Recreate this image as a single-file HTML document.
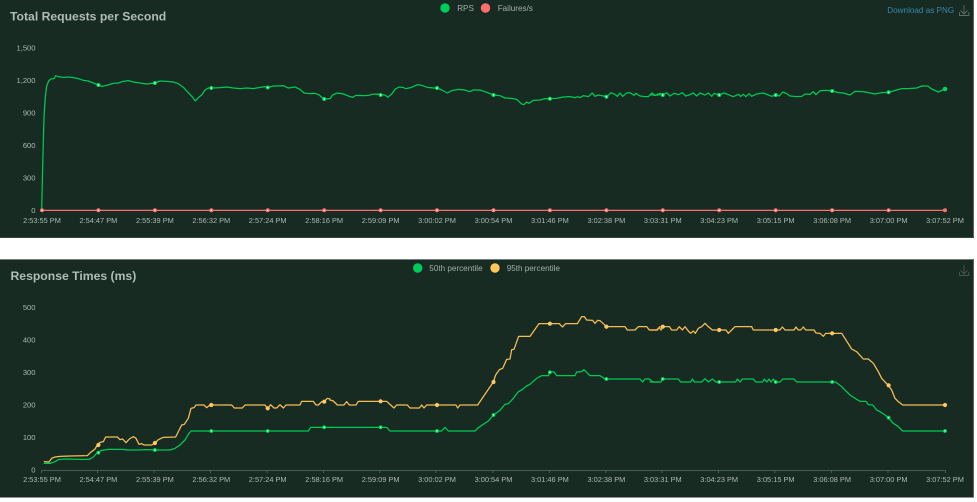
<!DOCTYPE html>
<html><head><meta charset="utf-8"><style>
html,body{margin:0;padding:0;background:#fff;width:977px;height:502px;overflow:hidden}
svg{display:block;position:absolute;left:0;top:0;filter:blur(.3px)}
text{font-family:"Liberation Sans",sans-serif;fill:#aeb8b3}
.x text{font-size:7.4px;text-anchor:middle}
.y text{font-size:7.6px;text-anchor:end}
.l{font-size:8.15px;fill:#a3aea8}
.t{font-size:12.2px;font-weight:bold;fill:#b0bcb6}
.ln{fill:none;stroke-width:3.8;stroke-linejoin:round;stroke-linecap:round}
.g{stroke:#00c853}.r{stroke:#ff6d6d}.o{stroke:#f5bd55}
.mg circle{fill:#00d65c}.mo circle{fill:#ffc860}.mr circle{fill:#ff6d6d}
.c circle{fill:#e6fff0}
</style></head><body>
<svg width="977" height="502" viewBox="0 0 977 502" xmlns="http://www.w3.org/2000/svg">
<rect width="977" height="502" fill="#fff"/>
<rect x="0" y="0" width="974" height="238" fill="#172b23"/>
<rect x="973" y="0" width="1" height="238" fill="#56645e"/>
<rect x="0" y="237" width="974" height="1" fill="#33463e"/>
<rect x="0" y="259" width="974" height="238.5" fill="#172b23"/>
<rect x="0" y="259" width="974" height="1" fill="#73807a"/>
<rect x="973" y="259" width="1" height="238" fill="#56645e"/>

<text class="t" x="10" y="20.5">Total Requests per Second</text>
<text class="t" x="10.5" y="280">Response Times (ms)</text>

<circle cx="445" cy="8" r="4.7" fill="#00ca5a"/><text class="l" x="457.2" y="11">RPS</text>
<circle cx="485.5" cy="8" r="4.7" fill="#ff6d6d"/><text class="l" x="497.7" y="11">Failures/s</text>
<text x="887.3" y="13" style="font-size:8.15px;fill:#3a86ad">Download as PNG</text>
<path d="M964 5V13.5M960.5 10.5L964 14L967.5 10.5M959.5 12V15.5H968.8V12" fill="none" stroke="#5e6e67" stroke-width=".9"/>

<circle cx="417.7" cy="268" r="4.7" fill="#00ca5a"/><text class="l" x="429.3" y="271">50th percentile</text>
<circle cx="495" cy="268" r="4.7" fill="#ffc65c"/><text class="l" x="506.7" y="271">95th percentile</text>
<path d="M964 264.500V273.500M960.500 270.500L964 274L967.500 270.500M959.500 272V275.500H968.800V272" fill="none" stroke="#46574f" stroke-width=".9"/>

<g class="y">
<text x="35.500" y="50.300">1,500</text><text x="35.500" y="82.800">1,200</text><text x="35.500" y="115.300">900</text><text x="35.500" y="147.800">600</text><text x="35.500" y="180.300">300</text><text x="35.500" y="213">0</text>
<text x="35.500" y="310">500</text><text x="35.500" y="342.500">400</text><text x="35.500" y="375">300</text><text x="35.500" y="407.500">200</text><text x="35.500" y="440">100</text><text x="35.500" y="472.500">0</text>
</g>

<g class="x">
<text x="42" y="222.800">2:53:55 PM</text><text x="98.400" y="222.800">2:54:47 PM</text><text x="154.900" y="222.800">2:55:39 PM</text><text x="211.300" y="222.800">2:56:32 PM</text><text x="267.700" y="222.800">2:57:24 PM</text><text x="324.200" y="222.800">2:58:16 PM</text><text x="380.600" y="222.800">2:59:09 PM</text><text x="437" y="222.800">3:00:02 PM</text><text x="493.500" y="222.800">3:00:54 PM</text><text x="549.900" y="222.800">3:01:46 PM</text><text x="606.400" y="222.800">3:02:38 PM</text><text x="662.800" y="222.800">3:03:31 PM</text><text x="719.200" y="222.800">3:04:23 PM</text><text x="775.700" y="222.800">3:05:15 PM</text><text x="832.100" y="222.800">3:06:08 PM</text><text x="888.600" y="222.800">3:07:00 PM</text><text x="945" y="222.800">3:07:52 PM</text>
<text x="42" y="481.800">2:53:55 PM</text><text x="98.400" y="481.800">2:54:47 PM</text><text x="154.900" y="481.800">2:55:39 PM</text><text x="211.300" y="481.800">2:56:32 PM</text><text x="267.700" y="481.800">2:57:24 PM</text><text x="324.200" y="481.800">2:58:16 PM</text><text x="380.600" y="481.800">2:59:09 PM</text><text x="437" y="481.800">3:00:02 PM</text><text x="493.500" y="481.800">3:00:54 PM</text><text x="549.900" y="481.800">3:01:46 PM</text><text x="606.400" y="481.800">3:02:38 PM</text><text x="662.800" y="481.800">3:03:31 PM</text><text x="719.200" y="481.800">3:04:23 PM</text><text x="775.700" y="481.800">3:05:15 PM</text><text x="832.100" y="481.800">3:06:08 PM</text><text x="888.600" y="481.800">3:07:00 PM</text><text x="945" y="481.800">3:07:52 PM</text>
</g>

<!-- axis lines -->
<path d="M41.500 470.500H945.500M41.500 470.500v2.500M97.500 470.500v2.500M154 470.500v2.500M210.500 470.500v2.500M267 470.500v2.500M323.500 470.500v2.500M379.800 470.500v2.500M435.800 470.500v2.500M492.800 470.500v2.500M549.300 470.500v2.500M605.800 470.500v2.500M662 470.500v2.500M718.500 470.500v2.500M774.800 470.500v2.500M831.300 470.500v2.500M888 470.500v2.500M945.500 470.500v2.500" fill="none" stroke="#5d6b65" stroke-width=".8"/>

<!-- Top chart -->
<g transform="scale(.33333)">
<polyline class="ln r" points="126,631 2835,631"/>
<polyline class="ln g" points="125,630 128,500 132,350 136,290 140,258 146,243 152,237 162,236 167,227 175,230 190,232 205,231 220,233 235,236 250,241 265,243 280,249 295,255 305,259 320,256 340,250 355,249 370,244 385,242 400,246 420,249 440,252 465,249 480,243 500,244 520,246 535,251 550,262 565,278 578,292 586,303 595,293 605,285 615,270 625,264 640,264 660,263 680,261 700,264 720,266 740,264 760,266 780,262 795,260 805,262 820,258 835,258 850,257 865,264 885,261 900,268 912,279 930,281 945,280 958,285 965,292 973,298 985,296 990,296"/>
</g>
<g transform="translate(330,0) scale(.33333)">
<polyline class="ln g" points="0,296 8,285 22,279 40,282 55,288 68,292 78,286 100,287 118,286 125,283 140,282 152,284 165,285 173,292 185,282 195,268 207,261 218,262 228,266 245,262 262,254 275,256 292,262 310,264 322,264 335,270 352,279 365,272 385,268 405,270 418,275 430,270 450,270 465,275 490,285 510,287 525,294 545,295 560,298 575,312 582,314 590,306 597,310 610,301 630,300 645,296 660,296 680,295 700,291 720,290 735,293 742,290 750,293 760,287 775,290 787,279 795,289 805,285 815,287 830,290 843,278 855,283 862,289 870,279 878,289 890,279 900,278 912,286 918,280 930,288 945,290 955,290 966,279 975,286 990,284"/>
</g>
<g transform="translate(650,0) scale(.33333)">
<polyline class="ln g" points="0,284 15,286 30,280 40,285 50,278 60,288 72,280 85,284 97,278 107,288 120,284 130,279 140,288 150,279 165,285 175,279 185,289 192,280 207,285 222,279 235,284 250,290 265,283 272,289 280,283 288,290 297,281 305,289 320,282 340,279 355,285 365,289 378,284 388,288 398,276 410,281 420,288 440,290 455,289 465,282 480,283 490,275 498,284 510,272 530,271 547,273 565,278 580,279 600,285 615,274 640,275 660,279 675,282 695,278 715,277 740,270 755,266 775,266 800,264 815,258 833,258 845,267 865,276 885,267"/>
</g>
<g class="mr">
<circle cx="42" cy="210.300" r="2"/><circle cx="98.400" cy="210.300" r="2"/><circle cx="154.900" cy="210.300" r="2"/><circle cx="211.300" cy="210.300" r="2"/><circle cx="267.700" cy="210.300" r="2"/><circle cx="324.200" cy="210.300" r="2"/><circle cx="380.600" cy="210.300" r="2"/><circle cx="437" cy="210.300" r="2"/><circle cx="493.500" cy="210.300" r="2"/><circle cx="549.900" cy="210.300" r="2"/><circle cx="606.400" cy="210.300" r="2"/><circle cx="662.800" cy="210.300" r="2"/><circle cx="719.200" cy="210.300" r="2"/><circle cx="775.700" cy="210.300" r="2"/><circle cx="832.100" cy="210.300" r="2"/><circle cx="888.600" cy="210.300" r="2"/><circle cx="945" cy="210.300" r="2"/>
</g>
<g class="mg">
<circle cx="98.400" cy="85" r="2"/><circle cx="154.900" cy="83" r="2"/><circle cx="211.300" cy="88" r="2"/><circle cx="267.700" cy="87.500" r="2"/><circle cx="324.200" cy="99" r="2"/><circle cx="380.600" cy="95" r="2"/><circle cx="437" cy="88" r="2"/><circle cx="493.500" cy="95" r="2"/><circle cx="549.900" cy="98.700" r="2"/><circle cx="606.400" cy="96.700" r="2"/><circle cx="662.800" cy="95" r="2"/><circle cx="719.200" cy="95" r="2"/><circle cx="775.700" cy="95" r="2"/><circle cx="832.100" cy="91" r="2"/><circle cx="888.600" cy="92.300" r="2"/><circle cx="945" cy="89" r="2.300"/>
</g>
<g class="c">
<circle cx="98.400" cy="85" r=".8"/><circle cx="154.900" cy="83" r=".8"/><circle cx="211.300" cy="88" r=".8"/><circle cx="267.700" cy="87.500" r=".8"/><circle cx="324.200" cy="99" r=".8"/><circle cx="380.600" cy="95" r=".8"/><circle cx="437" cy="88" r=".8"/><circle cx="493.500" cy="95" r=".8"/><circle cx="549.900" cy="98.700" r=".8"/><circle cx="606.400" cy="96.700" r=".8"/><circle cx="662.800" cy="95" r=".8"/><circle cx="719.200" cy="95" r=".8"/><circle cx="775.700" cy="95" r=".8"/><circle cx="832.100" cy="91" r=".8"/><circle cx="888.600" cy="92.300" r=".8"/>
<circle cx="42" cy="210.300" r=".8"/><circle cx="98.400" cy="210.300" r=".8"/><circle cx="154.900" cy="210.300" r=".8"/><circle cx="211.300" cy="210.300" r=".8"/><circle cx="267.700" cy="210.300" r=".8"/><circle cx="324.200" cy="210.300" r=".8"/><circle cx="380.600" cy="210.300" r=".8"/><circle cx="437" cy="210.300" r=".8"/><circle cx="493.500" cy="210.300" r=".8"/><circle cx="549.900" cy="210.300" r=".8"/><circle cx="606.400" cy="210.300" r=".8"/><circle cx="662.800" cy="210.300" r=".8"/><circle cx="719.200" cy="210.300" r=".8"/><circle cx="775.700" cy="210.300" r=".8"/><circle cx="832.100" cy="210.300" r=".8"/><circle cx="888.600" cy="210.300" r=".8"/>
</g>

<!-- Bottom chart -->
<g transform="translate(0,235) scale(.33333)">
<polyline class="ln g" points="133,685 152,685 165,680 177,673 200,672 240,673 268,673 280,666 292,653 305,646 325,643 370,643 380,645 410,645 440,644 465,645 510,645 525,640 540,630 555,615 565,598 573,588 800,588 925,588 932,577 990,577"/>
<polyline class="ln o" points="133,680 147,681 155,670 165,666 180,664 210,663 262,662 272,652 285,642 292,630 300,622 310,620 317,606 352,606 360,614 368,612 378,623 388,612 400,605 408,610 417,628 425,626 432,630 455,630 465,624 475,614 490,607 527,606 545,570 553,568 565,550 573,520 582,518 588,510 612,510 620,518 630,510 695,510 703,519 727,519 735,510 795,510 803,521 812,509 822,519 830,519 840,509 850,519 858,510 900,510 905,499 940,499 948,510 955,510 965,500 972,500 982,490 990,492"/>
</g>
<g transform="translate(330,235) scale(.33333)">
<polyline class="ln g" points="0,577 170,577 180,588 335,588 345,577 355,588 435,588 445,578 460,568 475,558 490,540 510,526 525,508 535,506 550,490 565,470 575,465 590,453 600,448 620,430 635,422 655,422 662,410 672,411 680,422 735,422 740,411 755,410 762,404 780,422 810,422 825,432 930,432 938,441 945,432 958,432 968,441 990,441"/>
<polyline class="ln o" points="0,495 10,498 22,510 42,510 50,500 58,510 78,510 85,499 170,499 182,510 192,519 200,510 232,510 240,519 268,519 275,510 282,519 290,510 378,510 383,519 390,510 443,510 490,441 497,420 508,404 518,400 530,373 540,372 545,344 552,343 566,304 600,304 627,266 688,266 697,276 707,266 742,266 755,245 763,245 770,255 788,256 795,265 803,256 810,257 830,275 885,275 892,285 915,285 925,275 950,275 958,285 980,285 990,275"/>
</g>
<g transform="translate(650,235) scale(.33333)">
<polyline class="ln g" points="0,441 33,441 38,432 85,432 92,441 122,441 127,432 133,441 155,441 165,431 175,441 187,432 198,441 257,441 262,432 270,441 277,432 310,432 317,441 338,441 343,432 350,441 357,432 363,441 370,432 377,441 390,441 398,432 432,432 440,441 557,441 575,455 600,480 615,490 630,499 648,499 655,509 668,510 680,525 690,530 705,540 715,548 730,565 745,575 758,588 885,588"/>
<polyline class="ln o" points="0,285 22,285 28,277 33,285 40,275 58,275 65,285 80,285 88,275 97,285 105,275 115,288 122,295 130,288 136,295 145,280 155,275 165,265 175,275 187,285 228,285 235,295 245,285 255,275 305,275 310,285 390,285 397,276 405,285 432,285 438,276 445,285 452,285 460,276 467,285 492,285 498,294 510,295 520,304 527,295 575,295 605,342 620,350 640,372 655,372 670,385 685,410 695,430 705,441 715,451 725,465 735,490 745,500 758,510 885,510"/>
</g>
<g class="mg">
<circle cx="98.400" cy="452.700" r="1.900"/><circle cx="154.900" cy="450" r="1.900"/><circle cx="211.300" cy="431" r="1.900"/><circle cx="267.700" cy="431" r="1.900"/><circle cx="324.200" cy="427.300" r="1.900"/><circle cx="380.600" cy="427.300" r="1.900"/><circle cx="437" cy="431" r="1.900"/><circle cx="493.500" cy="415" r="1.900"/><circle cx="549.900" cy="372.300" r="1.900"/><circle cx="606.400" cy="379" r="1.900"/><circle cx="662.800" cy="379" r="1.900"/><circle cx="719.200" cy="382" r="1.900"/><circle cx="775.700" cy="382" r="1.900"/><circle cx="832.100" cy="382" r="1.900"/><circle cx="888.600" cy="417.700" r="1.900"/><circle cx="945" cy="431" r="1.900"/>
</g>
<g class="mo">
<circle cx="98.400" cy="445" r="2.100"/><circle cx="154.900" cy="443" r="2.100"/><circle cx="211.300" cy="405" r="2.100"/><circle cx="267.700" cy="408.300" r="2.100"/><circle cx="324.200" cy="401.700" r="2.100"/><circle cx="380.600" cy="401.300" r="2.100"/><circle cx="437" cy="405" r="2.100"/><circle cx="493.500" cy="382" r="2.100"/><circle cx="549.900" cy="323.700" r="2.100"/><circle cx="606.400" cy="326.700" r="2.100"/><circle cx="662.800" cy="326.700" r="2.100"/><circle cx="719.200" cy="330" r="2.100"/><circle cx="775.700" cy="330" r="2.100"/><circle cx="832.100" cy="333.300" r="2.100"/><circle cx="888.600" cy="385.300" r="2.100"/><circle cx="945" cy="405" r="2.100"/>
</g>
<g class="c">
<circle cx="493.500" cy="415" r=".7"/><circle cx="549.900" cy="372.300" r=".7"/><circle cx="606.400" cy="379" r=".7"/><circle cx="662.800" cy="379" r=".7"/><circle cx="719.200" cy="382" r=".7"/><circle cx="775.700" cy="382" r=".7"/><circle cx="832.100" cy="382" r=".7"/><circle cx="888.600" cy="417.700" r=".7"/><circle cx="945" cy="431" r=".7"/><circle cx="98.400" cy="452.700" r=".7"/><circle cx="154.900" cy="450" r=".7"/><circle cx="211.300" cy="431" r=".7"/><circle cx="267.700" cy="431" r=".7"/><circle cx="324.200" cy="427.300" r=".7"/><circle cx="380.600" cy="427.300" r=".7"/><circle cx="437" cy="431" r=".7"/>
</g>
</svg>
</body></html>
